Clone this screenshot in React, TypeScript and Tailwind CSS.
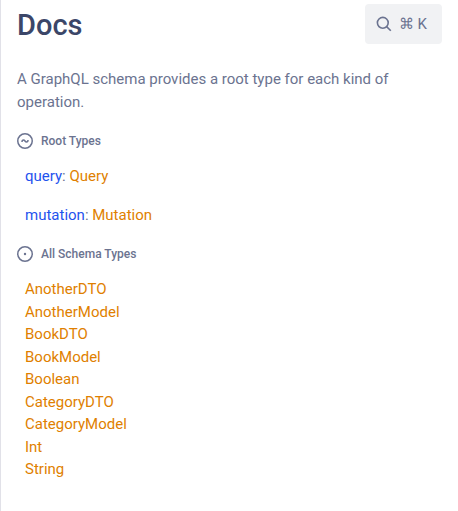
const types = ['AnotherDTO', 'AnotherModel', 'BookDTO', 'BookModel', 'Boolean', 'CategoryDTO', 'CategoryModel', 'Int', 'String'];

const typeLink = 'text-[#e07f00] hover:underline';

function SearchIcon() {
  return (
    <svg viewBox="0 0 14 14" className="size-3.5 overflow-visible" fill="none" stroke="currentColor" strokeWidth="1.6" aria-hidden="true">
      <circle cx="5.8" cy="5.8" r="5.4" />
      <path d="M9.6 9.6L13.8 13.8" />
    </svg>
  );
}

function RootIcon() {
  return (
    <svg viewBox="0 0 16 16" className="size-4" fill="none" stroke="currentColor" strokeWidth="1.5" aria-hidden="true">
      <circle cx="8" cy="8" r="7.25" />
      <path d="M5 9C5 8 5.6 7 6.5 7C8 7 8 9 9.5 9C10.4 9 11 8 11 7" />
    </svg>
  );
}

function TypeIcon() {
  return (
    <svg viewBox="0 0 16 16" className="size-4" fill="none" stroke="currentColor" strokeWidth="1.5" aria-hidden="true">
      <circle cx="8" cy="8" r="7.25" />
      <circle cx="8" cy="8" r="1.2" fill="currentColor" stroke="none" />
    </svg>
  );
}

export default function App() {
  return (
    <main className="min-h-screen border-l border-[#e1e1e8] bg-white px-4 pt-1 pb-8 font-[Roboto,sans-serif] text-[15px] leading-normal text-[#6b7390]">
      <header className="flex items-start justify-between">
        <h1 className="pt-1 text-[29px] leading-[34px] font-medium text-[#3b4668]">Docs</h1>
        <button type="button" aria-label="Search" className="flex h-10 items-center gap-2 rounded bg-[#f1f2f4] pr-[15px] pl-3">
          <SearchIcon />
          <span>⌘ K</span>
        </button>
      </header>
      <p className="mt-6">A GraphQL schema provides a root type for each kind of operation.</p>
      <section className="mt-5">
        <h2 className="flex items-center gap-2 text-xs leading-4 font-medium">
          <RootIcon />
          Root Types
        </h2>
        <div className="mt-4 flex flex-col gap-4 px-2">
          <div><span className="text-[#1f53ee]">query</span>: <a href="#query" className={typeLink}>Query</a></div>
          <div><span className="text-[#1f53ee]">mutation</span>: <a href="#mutation" className={typeLink}>Mutation</a></div>
        </div>
      </section>
      <section className="mt-5">
        <h2 className="flex items-center gap-2 text-xs leading-4 font-medium">
          <TypeIcon />
          All Schema Types
        </h2>
        <ul className="mt-4 px-2">
          {types.map((name) => (
            <li key={name}><a href={'#' + name} className={typeLink}>{name}</a></li>
          ))}
        </ul>
      </section>
    </main>
  );
}
